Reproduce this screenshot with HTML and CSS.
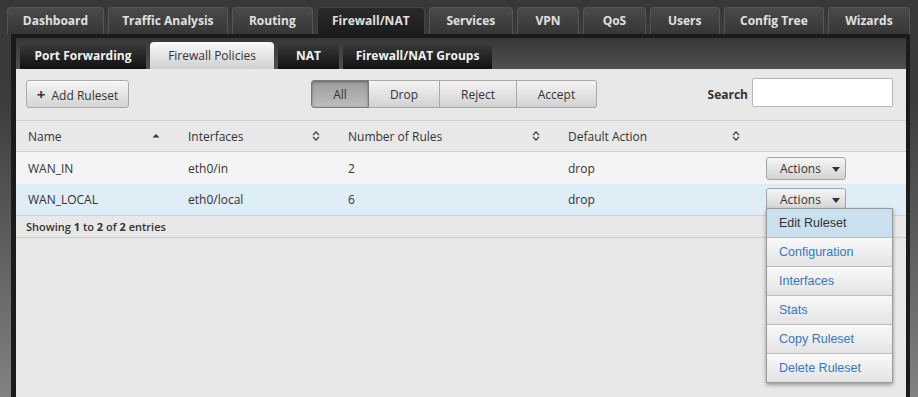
FILE: index.html
```html
<!DOCTYPE html>
<html lang="en">
<head>
  <meta charset="UTF-8" />
  <title>Firewall Policies</title>
  <link rel="stylesheet" href="styles.css">
</head>
<body>
  <div class="page">
    <nav class="main-tabs">
      <a class="tab">Dashboard</a>
      <a class="tab">Traffic Analysis</a>
      <a class="tab">Routing</a>
      <a class="tab active">Firewall/NAT</a>
      <a class="tab">Services</a>
      <a class="tab">VPN</a>
      <a class="tab">QoS</a>
      <a class="tab">Users</a>
      <a class="tab">Config Tree</a>
      <a class="tab">Wizards</a>
    </nav>

    <div class="panel">
      <div class="sub-tabs">
        <a class="sub-tab">Port Forwarding</a>
        <a class="sub-tab active">Firewall Policies</a>
        <a class="sub-tab">NAT</a>
        <a class="sub-tab">Firewall/NAT Groups</a>
      </div>

      <div class="content">
        <div class="toolbar">
          <button class="btn add-btn"><span class="plus">+</span> Add Ruleset</button>
          <div class="filter">
            <button class="filter-btn active">All</button>
            <button class="filter-btn">Drop</button>
            <button class="filter-btn">Reject</button>
            <button class="filter-btn">Accept</button>
          </div>
          <label class="search">Search <input type="text" /></label>
        </div>

        <table class="rules">
          <thead>
            <tr>
              <th class="c1">Name <svg class="sort" width="8" height="10" viewBox="0 0 8 10"><path d="M0.5 6.5 L4 3 L7.5 6.5 Z" fill="#333"/></svg></th>
              <th class="c2">Interfaces <svg class="sort" width="8" height="10" viewBox="0 0 8 10"><path d="M1 4 L4 1 L7 4 M1 6 L4 9 L7 6" fill="none" stroke="#444" stroke-width="1.3"/></svg></th>
              <th class="c3">Number of Rules <svg class="sort" width="8" height="10" viewBox="0 0 8 10"><path d="M1 4 L4 1 L7 4 M1 6 L4 9 L7 6" fill="none" stroke="#444" stroke-width="1.3"/></svg></th>
              <th class="c4">Default Action <svg class="sort" width="8" height="10" viewBox="0 0 8 10"><path d="M1 4 L4 1 L7 4 M1 6 L4 9 L7 6" fill="none" stroke="#444" stroke-width="1.3"/></svg></th>
              <th class="c5"></th>
            </tr>
          </thead>
          <tbody>
            <tr>
              <td>WAN_IN</td>
              <td>eth0/in</td>
              <td>2</td>
              <td>drop</td>
              <td><button class="actions-btn">Actions <span class="caret"></span></button></td>
            </tr>
            <tr class="selected">
              <td>WAN_LOCAL</td>
              <td>eth0/local</td>
              <td>6</td>
              <td>drop</td>
              <td>
                <div class="dropdown">
                  <button class="actions-btn">Actions <span class="caret"></span></button>
                  <ul class="menu">
                    <li class="hover">Edit Ruleset</li>
                    <li>Configuration</li>
                    <li>Interfaces</li>
                    <li>Stats</li>
                    <li>Copy Ruleset</li>
                    <li>Delete Ruleset</li>
                  </ul>
                </div>
              </td>
            </tr>
          </tbody>
        </table>
        <div class="info">Showing <b>1</b> to <b>2</b> of <b>2</b> entries</div>
      </div>
    </div>
  </div>
</body>
</html>
```

FILE: styles.css
```css
html, body {
  height: 100%;
}
body {
  margin: 0;
  font-family: "Open Sans", sans-serif;
  background: linear-gradient(#383838 0%, #3c3c3c 25%, #828282 100%);
  overflow: hidden;
}
.page {
  padding: 7px 8px 0 11px;
  height: 100%;
  box-sizing: border-box;
  display: flex;
  flex-direction: column;
}
.main-tabs {
  display: flex;
  gap: 4px;
  margin-left: -4px;
}
.tab {
  height: 26px;
  line-height: 26px;
  text-align: center;
  font-size: 12px;
  font-weight: 700;
  color: #e0e0e0;
  background: linear-gradient(#4a4a4a, #363636);
  border: 1px solid #555;
  border-bottom: none;
  border-radius: 4px 4px 0 0;
}
.tab:nth-child(1) { width: 96px; }
.tab:nth-child(2) { width: 119px; }
.tab:nth-child(3) { width: 80px; }
.tab:nth-child(4) { width: 107px; }
.tab:nth-child(5) { width: 83px; }
.tab:nth-child(6) { width: 61px; }
.tab:nth-child(7) { width: 61px; }
.tab:nth-child(8) { width: 69px; }
.tab:nth-child(9) { width: 99px; }
.tab:nth-child(10) { width: 81px; }
.tab.active {
  background: linear-gradient(#2a2a2a, #1c1c1c);
  border-color: #444;
}
.panel {
  flex: 1;
  display: flex;
  flex-direction: column;
  border: 4px solid #1b1b1b;
  border-left-width: 5px;
  border-bottom: none;
}
.sub-tabs {
  display: flex;
  gap: 4px;
  padding: 4px 4px 0;
  background: linear-gradient(#383838, #505050);
}
.sub-tab {
  height: 27px;
  line-height: 27px;
  text-align: center;
  font-size: 12px;
  font-weight: 700;
  color: #f2f2f2;
  background: linear-gradient(#3c3c3c, #111);
  border-radius: 4px 4px 0 0;
}
.sub-tab:nth-child(1) { width: 126px; }
.sub-tab:nth-child(2) { width: 124px; }
.sub-tab:nth-child(3) { width: 61px; }
.sub-tab:nth-child(4) { width: 149px; }
.sub-tab.active {
  color: #333;
  font-weight: 400;
  background: linear-gradient(#fafafa, #cfcfcf);
}
.content {
  flex: 1;
  background: #e8e8e8;
}
.toolbar {
  display: flex;
  align-items: center;
  padding: 11px 13px 12px 10px;
  border-bottom: 1px solid #d2d2d2;
}
.btn, .filter-btn, .actions-btn {
  font-family: "Open Sans", sans-serif;
  color: #333;
  cursor: pointer;
}
.add-btn {
  height: 28px;
  width: 103px;
  font-size: 12px;
  background: linear-gradient(#f6f6f6, #d4d4d4);
  border: 1px solid #a9a9a9;
  border-radius: 3px;
  box-shadow: 0 1px 0 rgba(255,255,255,0.6) inset;
}
.plus {
  font-size: 15px;
  font-weight: 700;
  margin-right: 3px;
}
.filter {
  display: flex;
  margin-left: 182px;
}
.filter-btn {
  height: 28px;
  font-size: 12px;
  background: linear-gradient(#f4f4f4, #d2d2d2);
  border: 1px solid #a9a9a9;
  border-left: none;
  margin: 0;
}
.filter-btn:first-child {
  border-left: 1px solid #8a8a8a;
  border-radius: 3px 0 0 3px;
}
.filter-btn:last-child {
  border-radius: 0 3px 3px 0;
}
.filter-btn:nth-child(1) { width: 58px; }
.filter-btn:nth-child(2) { width: 71px; }
.filter-btn:nth-child(3) { width: 77px; }
.filter-btn:nth-child(4) { width: 80px; }
.filter-btn.active {
  background: linear-gradient(#9c9c9c, #bdbdbd);
  border-color: #7a7a7a;
  box-shadow: 0 1px 3px rgba(0,0,0,0.35) inset;
}
.search {
  margin-left: auto;
  font-size: 12px;
  font-weight: 700;
  color: #333;
  display: flex;
  align-items: center;
  gap: 4px;
}
.search input {
  width: 141px;
  height: 29px;
  box-sizing: border-box;
  border: 1px solid #b5b5b5;
  border-radius: 2px;
  background: #fff;
  margin-top: -3px;
}
.rules {
  width: 100%;
  border-collapse: collapse;
  font-size: 12px;
  color: #333;
}
.rules th {
  height: 30px;
  text-align: left;
  font-weight: 400;
  padding: 0 16px 0 12px;
  border-bottom: 1px solid #d2d2d2;
}
.rules th .sort {
  float: right;
  margin-top: 3px;
}
.c1, .c2 { width: 160px; box-sizing: border-box; }
.c3 { width: 220px; box-sizing: border-box; }
.c4 { width: 200px; box-sizing: border-box; }
.rules td {
  height: 32px;
  padding: 0 12px;
  background: #f4f4f4;
}
.rules tr.selected td {
  background: #deedf6;
  height: 31px;
}
.rules td:last-child {
  padding-left: 10px;
}
.actions-btn {
  width: 80px;
  height: 23px;
  font-size: 12px;
  background: linear-gradient(#f5f5f5, #d3d3d3);
  border: 1px solid #a5a5a5;
  border-radius: 3px;
  text-align: left;
  padding: 0 0 0 13px;
}
.caret {
  display: inline-block;
  width: 0;
  height: 0;
  border-left: 4px solid transparent;
  border-right: 4px solid transparent;
  border-top: 5px solid #333;
  margin-left: 8px;
  vertical-align: 1px;
}
.dropdown {
  position: relative;
  display: inline-block;
}
.menu {
  position: absolute;
  top: 20px;
  left: 0;
  width: 125px;
  margin: 0;
  padding: 0;
  list-style: none;
  border: 1px solid #999;
  box-shadow: 0 2px 4px rgba(0,0,0,0.35);
  z-index: 2;
  font-family: "Liberation Sans", Arial, sans-serif;
  font-size: 12.5px;
}
.menu li {
  height: 28px;
  line-height: 28px;
  padding-left: 12px;
  color: #3578c2;
  background: linear-gradient(#f9f9f9, #e3e3e3);
  border-bottom: 1px solid #bdbdbd;
}
.menu li:last-child {
  border-bottom: none;
}
.menu li.hover {
  background: #c9e0ee;
  color: #333;
}
.info {
  font-size: 11px;
  font-weight: 600;
  color: #333;
  padding: 0 10px;
  height: 21px;
  line-height: 21px;
  border-top: 1px solid #d2d2d2;
  border-bottom: 1px solid #cfcfcf;
}
.info b {
  font-weight: 700;
}
```
